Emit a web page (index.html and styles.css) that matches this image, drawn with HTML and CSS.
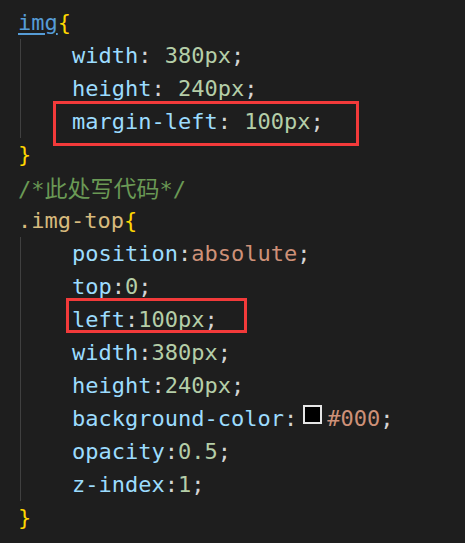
FILE: index.html
```html
<!DOCTYPE html>
<html>
<head>
<meta charset="utf-8">
<link rel="stylesheet" href="styles.css">
</head>
<body>
<div class="editor">
  <div class="line"><span class="tag">img</span><span class="br">{</span></div>
  <div class="block">
    <div class="line"><span class="prop">width</span><span class="pn">: </span><span class="num">380px</span><span class="pn">;</span></div>
    <div class="line"><span class="prop">height</span><span class="pn">: </span><span class="num">240px</span><span class="pn">;</span></div>
    <div class="line"><span class="prop">margin-left</span><span class="pn">: </span><span class="num">100px</span><span class="pn">;</span></div>
  </div>
  <div class="line"><span class="br">}</span></div>
  <div class="line"><span class="cm">/*<span class="cjk">此处写代码</span>*/</span></div>
  <div class="line"><span class="cls">.img-top</span><span class="br">{</span></div>
  <div class="block">
    <div class="line"><span class="prop">position</span><span class="pn">:</span><span class="str">absolute</span><span class="pn">;</span></div>
    <div class="line"><span class="prop">top</span><span class="pn">:</span><span class="num">0</span><span class="pn">;</span></div>
    <div class="line"><span class="prop">left</span><span class="pn">:</span><span class="num">100px</span><span class="pn">;</span></div>
    <div class="line"><span class="prop">width</span><span class="pn">:</span><span class="num">380px</span><span class="pn">;</span></div>
    <div class="line"><span class="prop">height</span><span class="pn">:</span><span class="num">240px</span><span class="pn">;</span></div>
    <div class="line"><span class="prop">background-color</span><span class="pn">:</span><span class="swatch"></span><span class="str">#000</span><span class="pn">;</span></div>
    <div class="line"><span class="prop">opacity</span><span class="pn">:</span><span class="num">0.5</span><span class="pn">;</span></div>
    <div class="line"><span class="prop">z-index</span><span class="pn">:</span><span class="num">1</span><span class="pn">;</span></div>
  </div>
  <div class="line"><span class="br">}</span></div>
  <div class="mark mark-one"></div>
  <div class="mark mark-two"></div>
</div>
</body>
</html>
```
FILE: styles.css
```css
html, body {
  margin: 0;
  padding: 0;
  background: #1e1e1e;
}
body {
  width: 465px;
  height: 543px;
  overflow: hidden;
}
.editor {
  position: relative;
  padding: 6px 0 0 18px;
  font-family: "DejaVu Sans Mono", "Liberation Mono", "Noto Sans CJK SC", monospace;
  font-size: 22px;
  line-height: 33px;
  color: #d4d4d4;
}
.line {
  height: 33px;
  white-space: pre;
}
.block {
  margin-left: 2px;
  border-left: 1px solid #404040;
  padding-left: 51px;
}
.tag {
  color: #569cd6;
  text-decoration: underline;
  text-underline-offset: 3px;
}
.cls { color: #d7ba7d; }
.br { color: #ffd700; }
.prop { color: #9cdcfe; }
.num { color: #b5cea8; }
.str { color: #ce9178; }
.pn { color: #d4d4d4; }
.cm { color: #6a9955; }
.cjk {
  font-family: "Noto Sans CJK SC", sans-serif;
  font-size: 23px;
}
.swatch {
  display: inline-block;
  box-sizing: border-box;
  width: 19px;
  height: 19px;
  margin: 0 5px 0 6px;
  border: 2px solid #e6e6e6;
  background: #000;
  vertical-align: 2px;
}
.mark {
  position: absolute;
  box-sizing: border-box;
  border: 3px solid #f23a3a;
}
.mark-one {
  left: 53px;
  top: 101px;
  width: 306px;
  height: 45px;
}
.mark-two {
  left: 66px;
  top: 298px;
  width: 181px;
  height: 35px;
}
```
